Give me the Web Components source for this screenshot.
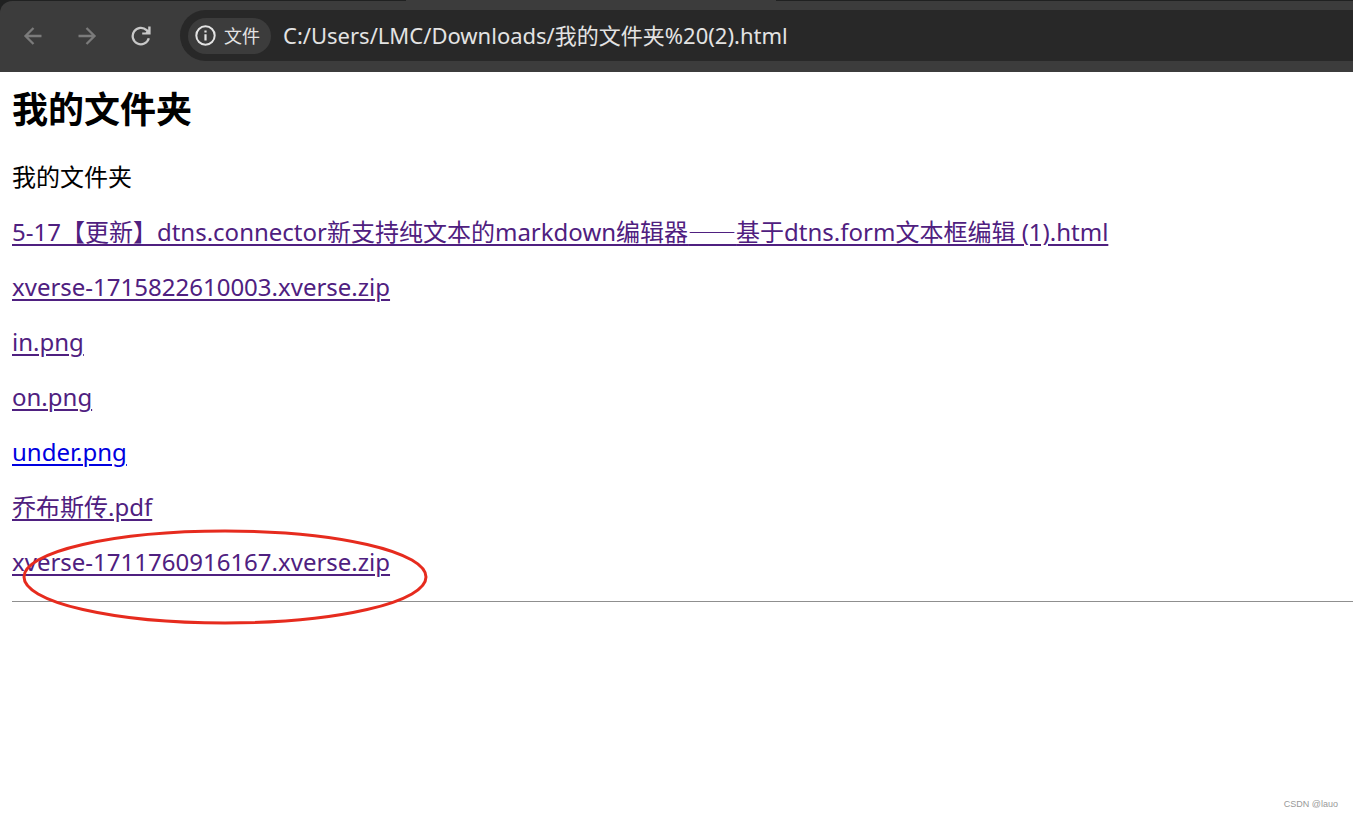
<!DOCTYPE html>
<html lang="zh-CN">
<head>
<meta charset="utf-8">
<title>我的文件夹</title>
<style>
  html { background: #fff; }
  body { margin: 0; min-height: 100vh; display: flex; flex-direction: column; font-family: "Noto Sans", "Noto Sans CJK SC", sans-serif; color: #000; }
  folder-page { flex: 1; }
  .dash { font-family: "Noto Sans CJK SC", sans-serif; }
</style>
</head>
<body>
<browser-toolbar>
  <nav-button label="后退" disabled><svg viewBox="0 0 20 20"><path d="M18.5 10H2.5M10.5 2L2.5 10L10.5 18"/></svg></nav-button>
  <nav-button label="前进" disabled><svg viewBox="0 0 20 20"><path d="M1.5 10H17.5M9.5 2L17.5 10L9.5 18"/></svg></nav-button>
  <nav-button label="重新加载"><svg viewBox="0 0 20 20"><path d="M17.8 12.3A8.2 8.2 0 1 1 15.6 4.2L17 5.6"/><path d="M19.6 0.6V8.6H11.2V6.4H14.6L17.2 3.8V0.6Z" fill="currentColor" stroke="none"/></svg></nav-button>
  <address-bar slot="address" value="C:/Users/LMC/Downloads/我的文件夹%20(2).html">文件</address-bar>
</browser-toolbar>
<folder-page>
  <span slot="title">我的文件夹</span>
  <span slot="summary">我的文件夹</span>
  <file-link visited href="#1">5-17【更新】dtns.connector新支持纯文本的markdown编辑器<span class="dash">——</span>基于dtns.form文本框编辑 (1).html</file-link>
  <file-link visited href="#2">xverse-1715822610003.xverse.zip</file-link>
  <file-link visited href="#3">in.png</file-link>
  <file-link visited href="#4">on.png</file-link>
  <file-link href="#5">under.png</file-link>
  <file-link visited href="#6">乔布斯传.pdf</file-link>
  <file-link visited marked href="#7">xverse-1711760916167.xverse.zip</file-link>
  <span slot="credit">CSDN @lauo</span>
</folder-page>
<script>
class ShadowElement extends HTMLElement {
  constructor() {
    super();
    this.attachShadow({ mode: "open" });
  }
  connectedCallback() { this.shadowRoot.innerHTML = this.render(); }
}

customElements.define("browser-toolbar", class extends ShadowElement {
  render() {
    return `<style>
      :host { display: block; background: #202121; padding-top: 1px; position: relative; }
      .tab { position: absolute; top: 0; left: 30%; width: 370px; height: 1px; background: #3c3c3c; }
      header { box-sizing: border-box; height: 71px; display: flex; align-items: center; gap: 12px; padding: 0 0 2px 6px; background: #3c3c3c; border-top-left-radius: 12px; }
      nav { display: flex; }
      slot[name=address]::slotted(*) { flex: 1; min-width: 0; }
    </style>
    <div class="tab"></div>
    <header><nav><slot></slot></nav><slot name="address"></slot></header>`;
  }
});

customElements.define("nav-button", class extends ShadowElement {
  render() {
    const off = this.hasAttribute("disabled");
    return `<style>
      :host { display: block; }
      button { display: flex; align-items: center; justify-content: center; width: 54px; height: 48px; padding: 0; border: 0; background: none; color: #c8c8c8; }
      button:disabled { color: #7b7b7b; }
      ::slotted(svg) { width: 20px; height: 20px; fill: none; stroke: currentColor; stroke-width: 2.3; }
    </style>
    <button type="button" aria-label="${this.getAttribute("label")}" ${off ? "disabled" : ""}><slot></slot></button>`;
  }
});

customElements.define("address-bar", class extends ShadowElement {
  render() {
    return `<style>
      :host { display: flex; align-items: center; gap: 12px; box-sizing: border-box; height: 51px; padding-left: 8px; background: #282828; border-radius: 26px 0 0 26px; }
      button { display: flex; align-items: center; gap: 8px; height: 36px; padding: 0 11px 0 7px; border: 0; border-radius: 18px; background: #3c3c3c; color: #e3e3e3; font: 18px/24px "Noto Sans", "Noto Sans CJK SC", sans-serif; white-space: nowrap; }
      svg { width: 21px; height: 21px; }
      input { flex: 1; min-width: 0; box-sizing: border-box; height: 36px; padding: 0 0 4px; border: 0; outline: 0; background: none; color: #e3e3e3; font: 22px/30px "Noto Sans", "Noto Sans CJK SC", sans-serif; }
    </style>
    <button type="button"><svg viewBox="0 0 21 21" aria-hidden="true"><circle cx="10.5" cy="10.5" r="9.2" fill="none" stroke="#e3e3e3" stroke-width="2"/><path d="M9.4 9.2h2.2v6.3H9.4zM9.4 5.4h2.2v2.2H9.4z" fill="#e3e3e3"/></svg><slot></slot></button>
    <input type="text" aria-label="地址" spellcheck="false" value="${this.getAttribute("value")}">`;
  }
});

customElements.define("folder-page", class extends ShadowElement {
  render() {
    return `<style>
      :host { display: flex; flex-direction: column; padding: 14px 0 6px 12px; font-size: 24px; line-height: 31px; }
      h2 { margin: 0; font-size: 36px; line-height: 48px; font-weight: 700; }
      p { margin: 27px 0 23px; }
      .files { display: flex; flex-direction: column; gap: 24px; }
      hr { width: 100%; box-sizing: border-box; margin: 24px 0 0; border: 0; border-top: 1px solid #8f8f8f; }
      footer { margin-top: auto; padding-right: 15px; text-align: right; font: 9px/14px "Liberation Sans", sans-serif; color: #999; }
    </style>
    <h2><slot name="title"></slot></h2>
    <p><slot name="summary"></slot></p>
    <div class="files"><slot></slot></div>
    <hr>
    <footer><slot name="credit"></slot></footer>`;
  }
});

customElements.define("file-link", class extends ShadowElement {
  render() {
    const ring = this.hasAttribute("marked")
      ? `<svg class="ring" viewBox="0 0 406 96" aria-hidden="true"><ellipse cx="203" cy="48" rx="201" ry="46" fill="none" stroke="#e62b1e" stroke-width="3"/></svg>` : "";
    return `<style>
      :host { display: block; position: relative; }
      a { color: #0000e0; text-decoration: underline; text-decoration-thickness: 2px; text-underline-offset: 3px; }
      :host([visited]) a { color: #4f2080; }
      .ring { position: absolute; left: 10px; top: -17px; width: 406px; height: 96px; pointer-events: none; }
    </style><a href="${this.getAttribute("href")}"><slot></slot></a>${ring}`;
  }
});
</script>
</body>
</html>
